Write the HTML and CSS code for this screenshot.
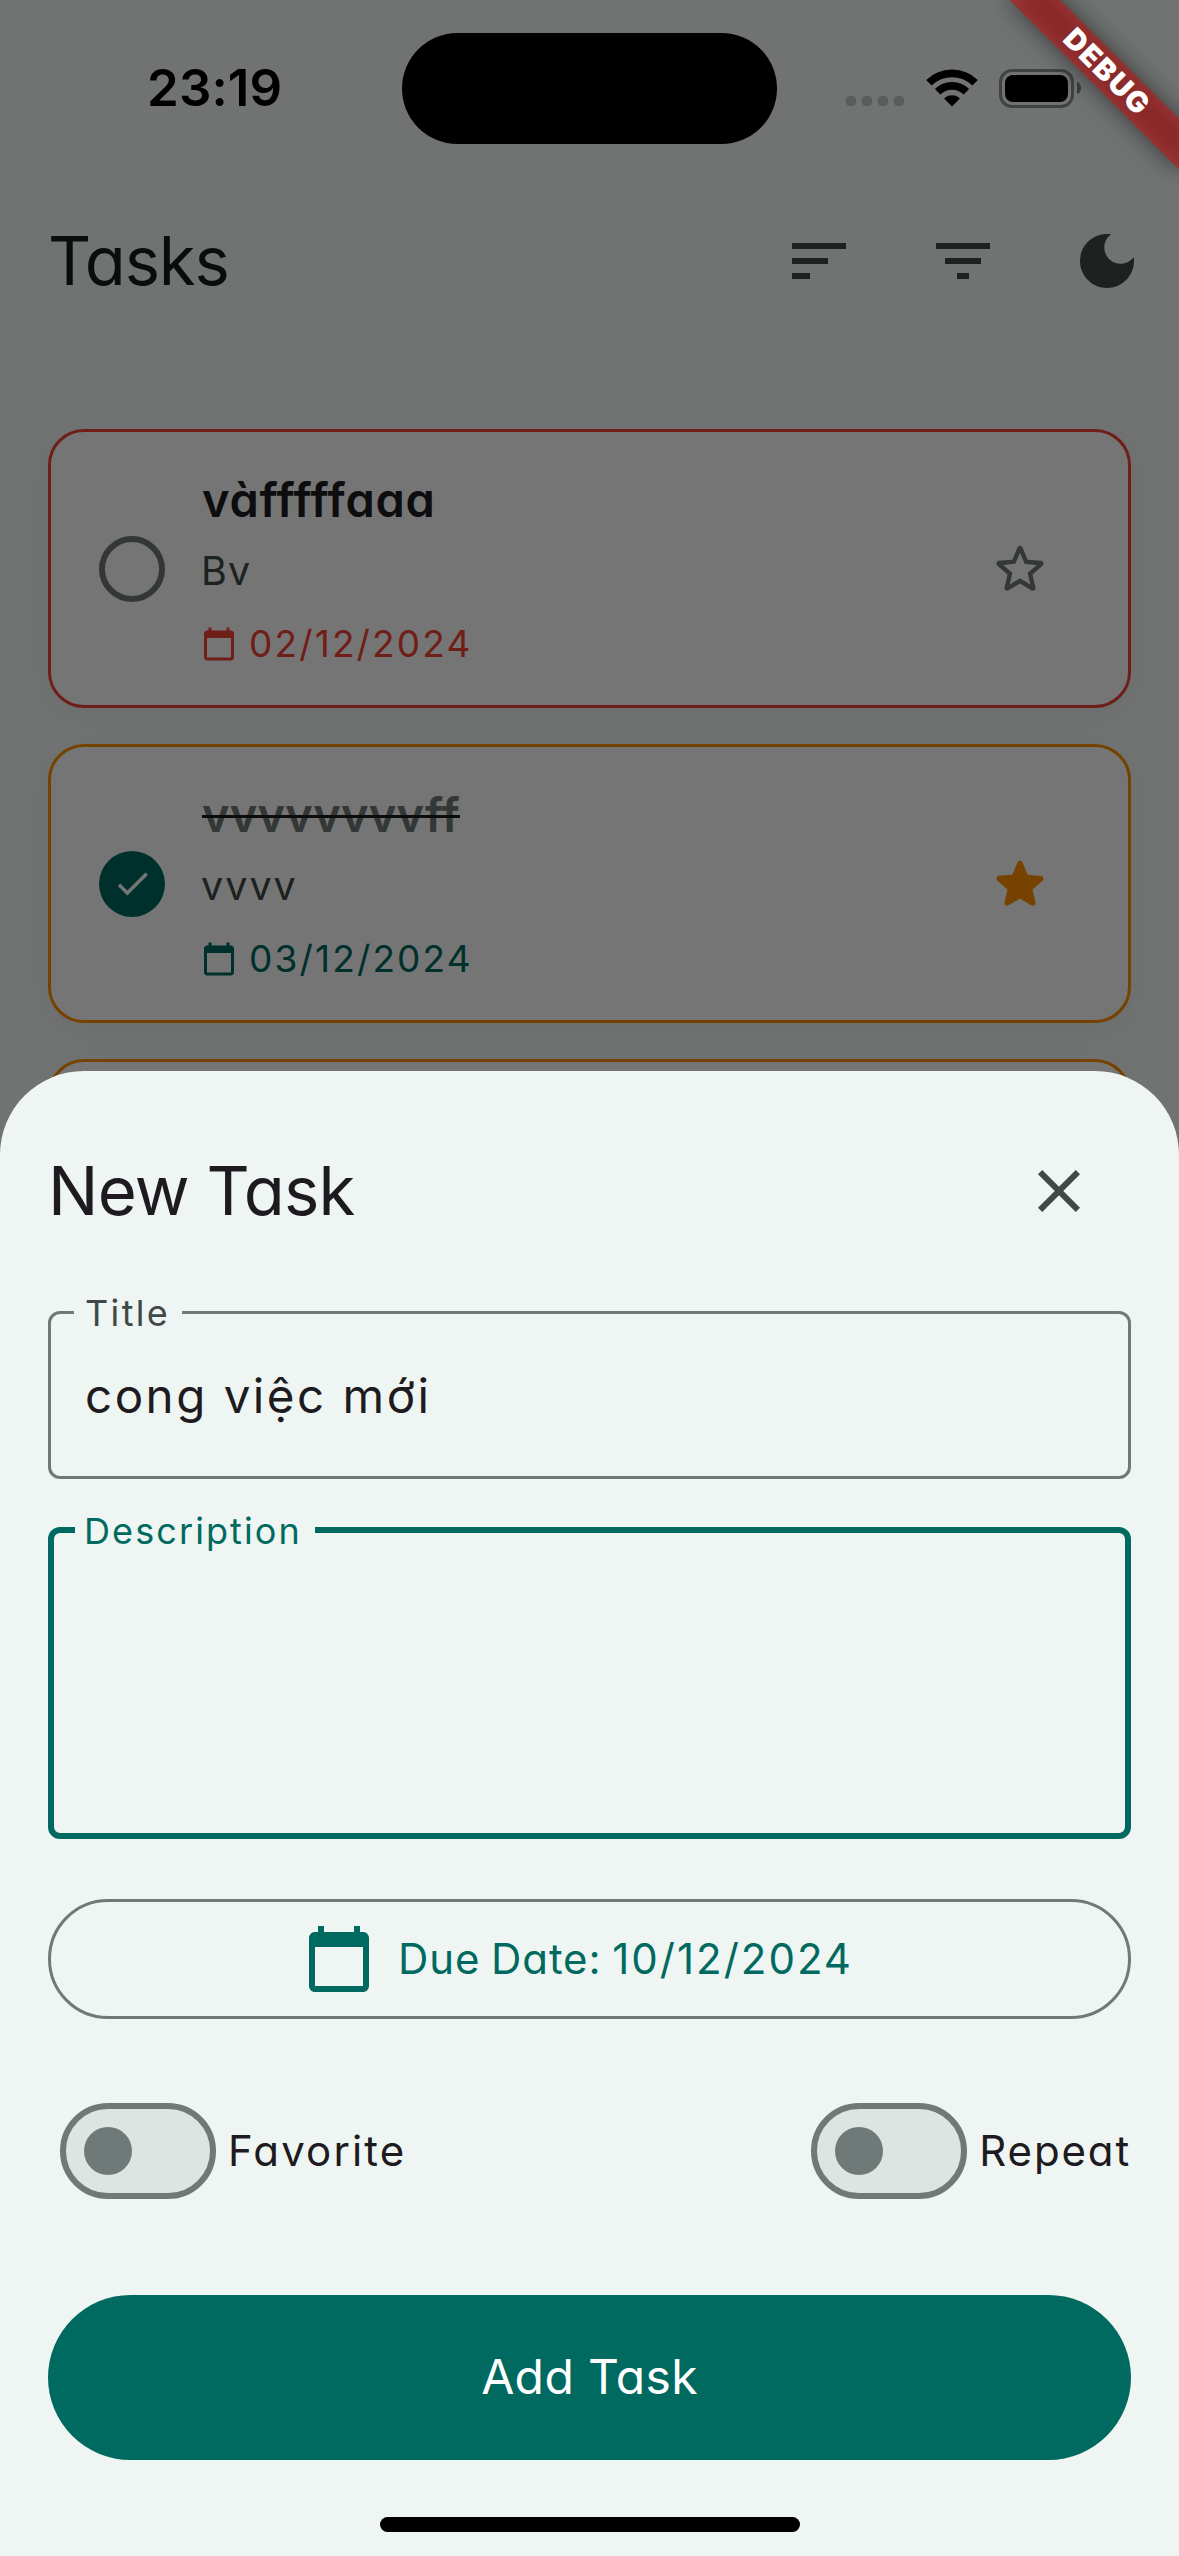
FILE: index.html
```html
<!DOCTYPE html>
<html lang="vi">
<head>
<meta charset="utf-8">
<title>Tasks</title>
<link rel="stylesheet" href="styles.css">
</head>
<body>
<svg class="defs" aria-hidden="true">
  <symbol id="calendar" viewBox="0 0 24 24"><path d="M20 3h-1V1h-2v2H7V1H5v2H4c-1.1 0-2 .9-2 2v16c0 1.1.9 2 2 2h16c1.1 0 2-.9 2-2V5c0-1.1-.9-2-2-2zm0 18H4V8h16v13z"/></symbol>
</svg>
<div class="screen">
  <main class="app">
    <header class="app-bar">
      <h1 class="app-title">Tasks</h1>
      <button class="icon-btn" aria-label="Sort"><svg viewBox="0 0 24 24"><path d="M3 18h6v-2H3v2zM3 6v2h18V6H3zm0 7h12v-2H3v2z"/></svg></button>
      <button class="icon-btn" aria-label="Filter"><svg viewBox="0 0 24 24"><path d="M10 18h4v-2h-4v2zM3 6v2h18V6H3zm3 7h12v-2H6v2z"/></svg></button>
      <button class="icon-btn" aria-label="Dark mode"><svg viewBox="0 0 24 24"><path d="M12 3c-4.97 0-9 4.03-9 9s4.03 9 9 9 9-4.03 9-9c0-.46-.04-.92-.1-1.36-.98 1.37-2.58 2.26-4.4 2.26-2.98 0-5.4-2.42-5.4-5.4 0-1.81.89-3.42 2.26-4.4-.44-.06-.9-.1-1.36-.1z"/></svg></button>
    </header>
    <section class="task-list">
      <article class="task overdue">
        <span class="check"></span>
        <div class="task-body">
          <div class="task-title">vàfffffaaa</div>
          <div class="task-note">Bv</div>
          <div class="task-date"><svg><use href="#calendar"/></svg><span>02/12/2024</span></div>
        </div>
        <svg class="star" viewBox="0 0 24 24"><path d="M19.65 9.04l-4.84-.42-1.89-4.45c-.34-.81-1.5-.81-1.84 0L9.19 8.63l-4.83.41c-.88.07-1.24 1.17-.57 1.75l3.67 3.18-1.1 4.72c-.2.86.73 1.54 1.49 1.08l4.15-2.5 4.15 2.51c.76.46 1.69-.22 1.49-1.08l-1.1-4.73 3.67-3.18c.67-.58.32-1.68-.56-1.75zM12 15.4l-3.76 2.27 1-4.28-3.32-2.88 4.38-.38L12 6.1l1.71 4.04 4.38.38-3.32 2.88 1 4.28L12 15.4z"/></svg>
      </article>
      <article class="task done">
        <span class="check"><svg viewBox="0 0 24 24"><path d="M9 16.17L4.83 12l-1.42 1.41L9 19 21 7l-1.41-1.41z"/></svg></span>
        <div class="task-body">
          <div class="task-title"><s>vvvvvvvvff</s></div>
          <div class="task-note">vvvv</div>
          <div class="task-date"><svg><use href="#calendar"/></svg><span>03/12/2024</span></div>
        </div>
        <svg class="star" viewBox="0 0 24 24"><path d="M12 17.27l4.15 2.51c.76.46 1.69-.22 1.49-1.08l-1.1-4.72 3.67-3.18c.67-.58.31-1.68-.57-1.75l-4.83-.41-1.89-4.46c-.34-.81-1.5-.81-1.84 0L9.19 8.63l-4.83.41c-.88.07-1.24 1.17-.57 1.75l3.67 3.18-1.1 4.72c-.2.86.73 1.54 1.49 1.08l4.15-2.5z"/></svg>
      </article>
      <article class="task done"></article>
    </section>
  </main>

  <div class="scrim"></div>

  <div class="status-bar">
    <span class="clock">23:19</span>
    <span class="island"></span>
    <span class="signal"><i></i><i></i><i></i><i></i></span>
    <svg class="wifi" viewBox="0 0 52 38"><path class="arc" d="M2.9 13.8A33.1 33.1 0 0 1 49.1 13.8M11.6 22.8A20.5 20.5 0 0 1 40.4 22.8"/><path d="M26 37.4L18.6 29.9Q18.2 29.3 18.8 28.8A11.8 11.8 0 0 1 33.2 28.8Q33.8 29.3 33.4 29.9Z"/></svg>
    <span class="battery"></span>
    <span class="battery-cap"></span>
  </div>

  <section class="sheet">
    <header class="sheet-head">
      <h2 class="sheet-title">New Task</h2>
      <button class="icon-btn" aria-label="Close"><svg viewBox="0 0 24 24"><path d="M19 6.41L17.59 5 12 10.59 6.41 5 5 6.41 10.59 12 5 17.59 6.41 19 12 13.41 17.59 19 19 17.59 13.41 12z"/></svg></button>
    </header>
    <div class="field field-title">
      <span class="label">Title</span>
      <span class="value">cong việc mới</span>
    </div>
    <div class="field field-desc">
      <span class="label">Description</span>
    </div>
    <button class="due"><svg><use href="#calendar"/></svg><span class="due-text">Due Date: <span class="due-value">10/12/2024</span></span></button>
    <div class="options">
      <div class="option"><span class="switch"></span><span class="option-name">Favorite</span></div>
      <div class="option"><span class="switch"></span><span class="option-name">Repeat</span></div>
    </div>
    <button class="submit">Add Task</button>
  </section>

  <div class="home-indicator"></div>
  <div class="debug"><span class="ribbon"><b>DEBUG</b></span></div>
</div>
</body>
</html>
```
FILE: styles.css
```css
* { box-sizing: border-box; }

body {
  margin: 0;
  font-family: Inter, "Noto Sans", sans-serif;
  font-feature-settings: "cv11";
  color: #1d1b20;
}

h1, h2 { margin: 0; font-weight: 400; }

button {
  border: 0;
  padding: 0;
  background: none;
  font: inherit;
  font-feature-settings: inherit;
  color: inherit;
}

svg { display: block; flex: none; fill: currentColor; }
.defs { position: absolute; width: 0; height: 0; }

.screen {
  position: relative;
  width: 1179px;
  height: 2556px;
  overflow: hidden;
  background: #f4fbf8;
}

/* App behind the sheet */
.app { padding-top: 177px; }

.app-bar {
  display: flex;
  align-items: center;
  height: 168px;
  padding-left: 48px;
}

.app-title {
  flex: 1;
  font-size: 67px;
  line-height: 84px;
  letter-spacing: -1.2px;
  color: #161d1b;
}

.icon-btn {
  display: flex;
  align-items: center;
  justify-content: center;
  width: 144px;
  height: 144px;
  color: #3f4947;
}
.icon-btn svg { width: 72px; height: 72px; }

.task-list {
  display: flex;
  flex-direction: column;
  gap: 36px;
  padding: 84px 48px 0;
}

.task {
  display: flex;
  align-items: center;
  height: 279px;
  padding: 0 75px 0 48px;
  border: 3px solid;
  border-radius: 36px;
  background: #fff;
  box-shadow: 0 6px 30px rgba(0, 0, 0, .05);
}
.task.overdue { border-color: #f44336; }
.task.done { border-color: #ff9100; }

.check {
  display: flex;
  align-items: center;
  justify-content: center;
  width: 66px;
  height: 66px;
  border: 6px solid #6f7977;
  border-radius: 50%;
}
.done .check { border: 0; background: #006a60; color: #fff; }
.check svg { width: 41px; height: 41px; }

.task-body { flex: 1; margin: 8px 0 0 36px; }

.task-title {
  padding-left: 1px;
  font-size: 47px;
  font-weight: 600;
  line-height: 72px;
  letter-spacing: .7px;
}
.done .task-title { letter-spacing: .2px; color: #6f7977; }
.done .task-title s { text-decoration: line-through #161d1b 3px; }

.task-note {
  font-size: 39.5px;
  line-height: 70px;
  letter-spacing: 1.15px;
  color: #3f4947;
}
.done .task-note { letter-spacing: 2px; }

.task-date {
  display: flex;
  align-items: center;
  gap: 12px;
  height: 76px;
  font-size: 37px;
  letter-spacing: 2.15px;
}
.task-date svg { width: 36px; height: 36px; }
.overdue .task-date { color: #f44336; }
.done .task-date { color: #006a60; }

.star { width: 66px; height: 66px; color: #6f7977; }
.done .star { color: #ff9100; }

.scrim { position: absolute; inset: 0; background: rgba(0, 0, 0, .54); }

/* System status bar */
.status-bar {
  position: absolute;
  inset: 0 0 auto;
  display: flex;
  align-items: center;
  height: 177px;
  color: #000;
}
.clock {
  width: 255px;
  margin: 0 0 2px 147px;
  font-size: 51px;
  font-weight: 600;
  line-height: 60px;
  letter-spacing: .1px;
}
.island { width: 375px; height: 111px; border-radius: 56px; background: #000; }
.signal { display: flex; gap: 6px; margin: 25px 22px 0 69px; }
.signal i { width: 10px; height: 10px; border-radius: 4px; background: rgba(0, 0, 0, .2); }
.wifi { width: 52px; height: 38px; margin-bottom: 1px; }
.wifi .arc { fill: none; stroke: #000; stroke-width: 7.8; }
.battery {
  width: 75px;
  height: 39px;
  margin: 0 3px 1px 21px;
  padding: 3px;
  border: 3px solid rgba(0, 0, 0, .42);
  border-radius: 13px;
}
.battery::before {
  content: "";
  display: block;
  height: 27px;
  border-radius: 8px;
  background: #000;
}
.battery-cap {
  width: 4px;
  height: 12px;
  margin-bottom: 1px;
  border-radius: 0 4px 4px 0 / 0 6px 6px 0;
  background: rgba(0, 0, 0, .45);
}

/* New task sheet */
.sheet {
  position: absolute;
  inset: 1071px 0 0;
  padding: 48px 48px 0;
  border-radius: 84px 84px 0 0;
  background: #eef5f2;
}

.sheet-head {
  display: flex;
  align-items: center;
  justify-content: space-between;
  height: 144px;
  margin-bottom: 48px;
}
.sheet-title { font-size: 67px; line-height: 84px; letter-spacing: -.85px; }

.field {
  position: relative;
  display: flex;
  align-items: center;
  border-radius: 12px;
}
.field-title { height: 168px; padding-left: 34px; border: 3px solid #6f7977; color: #3f4947; }
.field-desc { height: 312px; margin-top: 48px; border: 6px solid #006a60; color: #006a60; }

.label {
  position: absolute;
  top: -22px;
  left: 23px;
  padding: 0 12px 0 11px;
  background: #eef5f2;
  font-size: 36px;
  line-height: 42px;
  letter-spacing: 2.35px;
}
.field-desc .label { top: -23px; left: 21px; padding: 0 13px 0 9px; letter-spacing: 2.1px; }

.value { font-size: 47.5px; letter-spacing: 2.5px; color: #1d1b20; }

.due {
  display: flex;
  align-items: center;
  justify-content: center;
  gap: 23px;
  width: 100%;
  height: 120px;
  margin-top: 60px;
  padding: 0 69px 0 46px;
  border: 3px solid #6f7977;
  border-radius: 60px;
  font-size: 42px;
  color: #006a60;
}
.due svg { width: 72px; height: 72px; }
.due-text { margin-bottom: 2px; letter-spacing: .9px; word-spacing: -2px; }
.due-value { letter-spacing: 2px; }

.options {
  display: flex;
  justify-content: space-between;
  margin: 60px 0 72px 12px;
}
.option {
  display: flex;
  align-items: center;
  gap: 12px;
  height: 144px;
  font-size: 42px;
  letter-spacing: 2.15px;
}
.option:last-child { letter-spacing: 1.85px; }
.option-name { margin-bottom: 2px; }

.switch {
  display: flex;
  align-items: center;
  width: 156px;
  height: 96px;
  padding-left: 18px;
  border: 6px solid #6f7977;
  border-radius: 48px;
  background: #dde4e1;
}
.switch::before {
  content: "";
  width: 48px;
  height: 48px;
  border-radius: 50%;
  background: #6f7977;
}

.submit {
  display: block;
  width: 100%;
  height: 165px;
  padding-bottom: 3px;
  border-radius: 83px;
  background: #006a60;
  font-size: 48px;
  letter-spacing: .38px;
  color: #fff;
}

.home-indicator {
  position: absolute;
  left: 380px;
  bottom: 24px;
  width: 420px;
  height: 15px;
  border-radius: 8px;
  background: #000;
}

/* Corner ribbon */
.debug {
  position: absolute;
  top: 0;
  right: 0;
  width: 300px;
  height: 300px;
  overflow: hidden;
}
.ribbon {
  position: absolute;
  top: 54px;
  left: 108px;
  display: flex;
  align-items: center;
  justify-content: center;
  width: 240px;
  height: 36px;
  transform: rotate(45deg);
}
.ribbon::before, .ribbon::after { content: ""; position: absolute; inset: 0; }
.ribbon::before { background: rgba(0, 0, 0, .5); filter: blur(12px); }
.ribbon::after { background: rgba(183, 28, 28, .63); }
.ribbon b {
  position: relative;
  z-index: 1;
  font-size: 29px;
  font-weight: 900;
  line-height: 34px;
  letter-spacing: 1.6px;
  color: #fff;
}
```
